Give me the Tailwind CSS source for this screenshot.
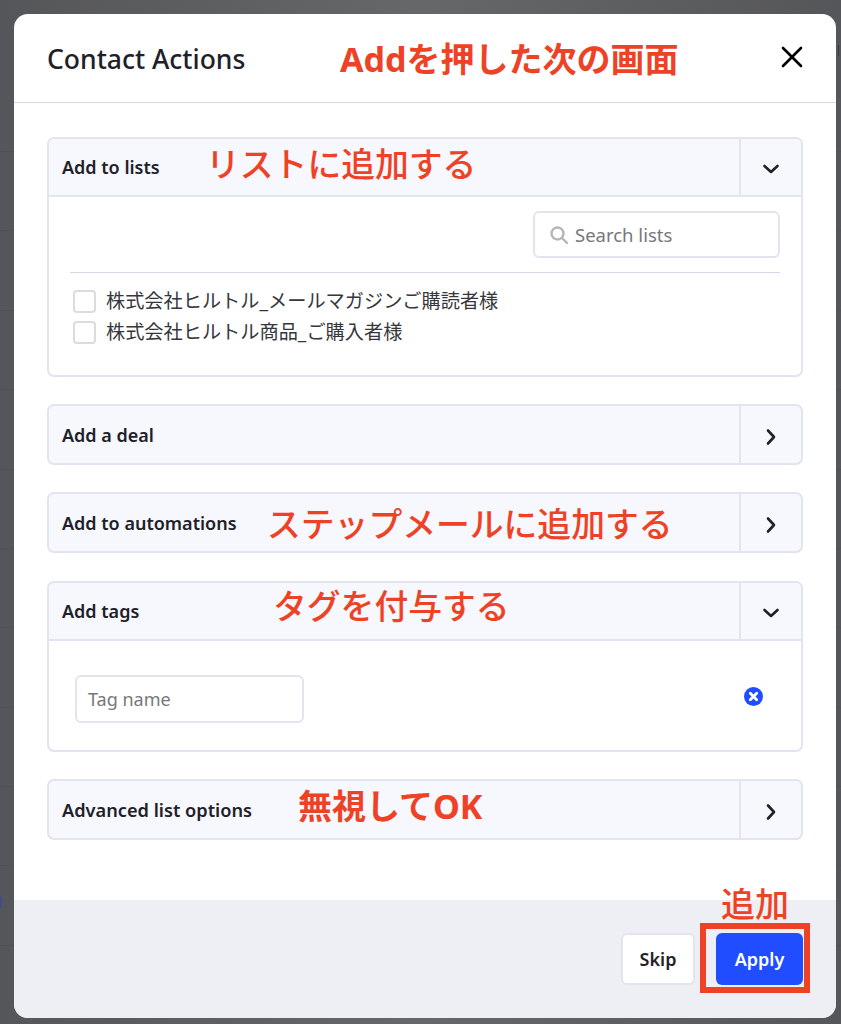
<!DOCTYPE html>
<!-- Contact Actions modal with red annotations -->
<html lang="ja">
<head>
  <meta charset="utf-8" />
  <title>Contact Actions</title>
  <script src="https://cdn.jsdelivr.net/npm/@tailwindcss/browser@4"></script>
</head>
<body class="font-['Noto_Sans','Noto_Sans_CJK_JP',sans-serif]">
  <div class="relative w-[841px] h-[1024px] overflow-hidden bg-[#5f6065]">
    <!-- Dimmed table rows behind the modal -->
    <div class="pt-[151px] bg-gradient-to-r from-[#55565a] via-[#66676b] to-[#55565a] h-full">
      <div class="h-[79px] border-t border-[#4f5054]"></div>
      <div class="h-[80px] border-t border-[#4f5054]"></div>
      <div class="h-[79px] border-t border-[#4f5054]"></div>
      <div class="h-[80px] border-t border-[#4f5054]"></div>
      <div class="h-[79px] border-t border-[#4f5054]"></div>
      <div class="h-[79px] border-t border-[#4f5054]"></div>
      <div class="h-[80px] border-t border-[#4f5054]"></div>
      <div class="h-[79px] border-t border-[#4f5054]"></div>
      <div class="h-[79px] border-t border-[#4f5054]"></div>
      <div class="h-[80px] border-t border-[#4f5054]"></div>
      <div class="h-[79px] border-t border-[#4f5054]"></div>
    </div>
    <!-- Slivers of the page behind that stick out past the modal -->
    <div class="absolute left-0 top-[897px] w-[2px] h-[11px] bg-[#3a4a9a]/70"></div>
    <div class="absolute left-[838px] top-[45px] w-[1px] h-[11px] bg-[#3b3c40]"></div>

    <!-- Modal -->
    <div class="absolute left-[14px] top-[14px] w-[822px] h-[1004px] bg-white rounded-[14px] overflow-hidden flex flex-col">
      <header class="h-[89px] shrink-0 border-b border-[#d5d8e6] flex items-center justify-between pl-[33px] pr-[32px]">
        <h1 class="text-[26.5px] font-medium text-[#1f2129] mt-[3px]">Contact Actions</h1>
        <svg class="w-[24px] h-[24px] -mt-[2px]" viewBox="0 0 24 24" fill="none" stroke="#000" stroke-width="2.6" stroke-linecap="round"><path d="M3 3 L21 21 M21 3 L3 21" /></svg>
      </header>

      <main class="flex-1 pt-[34px] px-[33px] flex flex-col">
        <!-- Add to lists -->
        <section class="h-[240px] border-2 border-[#e2e4ef] rounded-[7px] overflow-hidden">
          <div class="h-[58px] bg-[#f7f8fd] border-b-2 border-[#e2e4ef] flex">
            <div class="flex-1 pl-[13px] pt-[1px] flex items-center text-[18px] font-semibold text-[#1f2129]">Add to lists</div>
            <div class="w-[62px] border-l-2 border-[#e2e4ef] flex items-center justify-center">
              <svg class="w-[18px] h-[12px] mt-[3px]" viewBox="0 0 18 12" fill="none" stroke="#1f2129" stroke-width="2.6" stroke-linecap="round" stroke-linejoin="round"><path d="M2.5 3 L9 9 L15.5 3" /></svg>
            </div>
          </div>
          <div class="px-[21px] pt-[14px]">
            <div class="flex justify-end">
              <div class="w-[247px] h-[47px] border-2 border-[#e2e4ef] rounded-[6px] flex items-center pl-[14px] gap-[6px]">
                <svg class="w-[20px] h-[20px]" viewBox="0 0 20 20" fill="none" stroke="#b5b6b8" stroke-width="2.4" stroke-linecap="round"><circle cx="8.5" cy="8.5" r="6" /><path d="M13 13 L18 18" /></svg>
                <span class="text-[18.5px] text-[#77787c]">Search lists</span>
              </div>
            </div>
            <div class="h-[1px] bg-[#d5d8e6] mt-[14px]"></div>
            <div class="mt-[16px] pl-[3px] flex items-center gap-[10px] h-[24px]">
              <span class="w-[23px] h-[23px] rounded-[4px] border-2 border-[#dcdcdc] bg-white"></span>
              <span class="text-[19.2px] text-[#36373c] whitespace-nowrap">株式会社ヒルトル_メールマガジンご購読者様</span>
            </div>
            <div class="mt-[7px] pl-[3px] flex items-center gap-[10px] h-[24px]">
              <span class="w-[23px] h-[23px] rounded-[4px] border-2 border-[#dcdcdc] bg-white"></span>
              <span class="text-[19.2px] text-[#36373c] whitespace-nowrap">株式会社ヒルトル商品_ご購入者様</span>
            </div>
          </div>
        </section>

        <!-- Add a deal -->
        <section class="mt-[27px] h-[61px] border-2 border-[#e2e4ef] rounded-[7px] bg-[#f7f8fd] flex">
          <div class="flex-1 pl-[13px] pt-[2px] flex items-center text-[18px] font-semibold text-[#1f2129]">Add a deal</div>
          <div class="w-[62px] border-l-2 border-[#e2e4ef] flex items-center justify-center">
            <svg class="w-[12px] h-[18px] mt-[4px]" viewBox="0 0 12 18" fill="none" stroke="#1f2129" stroke-width="2.6" stroke-linecap="round" stroke-linejoin="round"><path d="M3 2.5 L9 9 L3 15.5" /></svg>
          </div>
        </section>

        <!-- Add to automations -->
        <section class="mt-[27px] h-[61px] border-2 border-[#e2e4ef] rounded-[7px] bg-[#f7f8fd] flex">
          <div class="flex-1 pl-[13px] pt-[2px] flex items-center text-[18px] font-semibold text-[#1f2129]">Add to automations</div>
          <div class="w-[62px] border-l-2 border-[#e2e4ef] flex items-center justify-center">
            <svg class="w-[12px] h-[18px] mt-[4px]" viewBox="0 0 12 18" fill="none" stroke="#1f2129" stroke-width="2.6" stroke-linecap="round" stroke-linejoin="round"><path d="M3 2.5 L9 9 L3 15.5" /></svg>
          </div>
        </section>

        <!-- Add tags -->
        <section class="mt-[28px] h-[171px] border-2 border-[#e2e4ef] rounded-[7px] overflow-hidden">
          <div class="h-[58px] bg-[#f7f8fd] border-b-2 border-[#e2e4ef] flex">
            <div class="flex-1 pl-[13px] pt-[1px] flex items-center text-[18px] font-semibold text-[#1f2129]">Add tags</div>
            <div class="w-[62px] border-l-2 border-[#e2e4ef] flex items-center justify-center">
              <svg class="w-[18px] h-[12px] mt-[3px]" viewBox="0 0 18 12" fill="none" stroke="#1f2129" stroke-width="2.6" stroke-linecap="round" stroke-linejoin="round"><path d="M2.5 3 L9 9 L15.5 3" /></svg>
            </div>
          </div>
          <div class="pl-[26px] pr-[38px] pt-[34px] flex items-start justify-between">
            <div class="w-[229px] h-[48px] border-2 border-[#e2e4ef] rounded-[6px] flex items-center pl-[11px] pt-[1px] text-[18px] text-[#77787c]">Tag name</div>
            <svg class="w-[19px] h-[19px] mt-[12px]" viewBox="0 0 19 19"><circle cx="9.5" cy="9.5" r="9.5" fill="#1f4dff" /><path d="M6.3 6.3 L12.7 12.7 M12.7 6.3 L6.3 12.7" stroke="#fff" stroke-width="2.8" stroke-linecap="round" /></svg>
          </div>
        </section>

        <!-- Advanced list options -->
        <section class="mt-[27px] h-[61px] border-2 border-[#e2e4ef] rounded-[7px] bg-[#f7f8fd] flex">
          <div class="flex-1 pl-[13px] pt-[2px] flex items-center text-[18.2px] font-semibold text-[#1f2129]">Advanced list options</div>
          <div class="w-[62px] border-l-2 border-[#e2e4ef] flex items-center justify-center">
            <svg class="w-[12px] h-[18px] mt-[4px]" viewBox="0 0 12 18" fill="none" stroke="#1f2129" stroke-width="2.6" stroke-linecap="round" stroke-linejoin="round"><path d="M3 2.5 L9 9 L3 15.5" /></svg>
          </div>
        </section>
      </main>

      <footer class="h-[118px] shrink-0 bg-[#eeeff5] flex items-start justify-end gap-[21px] pt-[33px] pr-[33px]">
        <button class="w-[74px] h-[52px] bg-white border-2 border-[#e2e4ef] rounded-[6px] text-[18px] font-semibold text-[#1f2129]">Skip</button>
        <button class="w-[87px] h-[52px] bg-[#1f4dff] rounded-[6px] text-[18px] font-semibold text-white">Apply</button>
      </footer>
    </div>

    <!-- Red annotations on top of the screenshot -->
    <div class="absolute left-[700px] top-[923px] w-[110px] h-[70px] border-[6px] border-[#ee4226]"></div>
    <span class="absolute left-[340px] top-[37px] text-[34px] leading-[44px] font-bold text-[#ee4226] whitespace-nowrap">Addを押した次の画面</span>
    <span class="absolute left-[206px] top-[142px] text-[33.8px] leading-[44px] font-medium text-[#ee4226] whitespace-nowrap">リストに追加する</span>
    <span class="absolute left-[267px] top-[502px] text-[33.8px] leading-[44px] font-medium text-[#ee4226] whitespace-nowrap">ステップメールに追加する</span>
    <span class="absolute left-[273px] top-[584px] text-[33.8px] leading-[44px] font-medium text-[#ee4226] whitespace-nowrap">タグを付与する</span>
    <span class="absolute left-[298px] top-[784px] text-[34px] leading-[44px] font-bold text-[#ee4226] whitespace-nowrap">無視してOK</span>
    <span class="absolute left-[721px] top-[882px] text-[34px] leading-[44px] font-medium text-[#ee4226] whitespace-nowrap">追加</span>
  </div>
</body>
</html>
